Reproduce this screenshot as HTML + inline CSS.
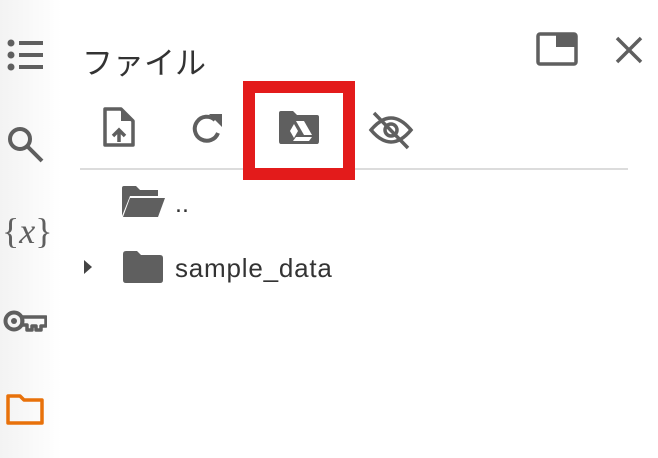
<!DOCTYPE html>
<html><head><meta charset="utf-8"><style>
body{margin:0;width:658px;height:458px;background:#fff;position:relative;overflow:hidden;font-family:"Liberation Sans","Noto Sans CJK JP",sans-serif;color:#222}
.side{position:absolute;left:0;top:0;width:62px;height:458px;background:linear-gradient(to right,#f3f3f3,#fff)}
svg{position:absolute}
.t{position:absolute}
</style></head><body>
<div class="side"></div>
<svg style="left:5px;top:38px" width="40" height="36" viewBox="0 0 40 36"><g fill="#5f5f5f"><circle cx="6" cy="5" r="3.5"/><circle cx="6" cy="17" r="3.5"/><circle cx="6" cy="29" r="3.5"/><rect x="14" y="3" width="24" height="4"/><rect x="14" y="15" width="24" height="4"/><rect x="14" y="27" width="24" height="4"/></g></svg>
<svg style="left:6px;top:125px" width="40" height="40" viewBox="0 0 40 40"><circle cx="14" cy="14" r="10" fill="none" stroke="#5f5f5f" stroke-width="4"/><path d="M21 21L36 36" stroke="#5f5f5f" stroke-width="4"/></svg>
<div class="t" style="left:2px;top:210px;font-family:'Liberation Serif',serif;font-size:36px;color:#5f5f5f"><span>{</span><i>x</i><span>}</span></div>
<svg style="left:3px;top:308px" width="44" height="26" viewBox="0 0 44 26"><circle cx="11" cy="13" r="8.5" fill="none" stroke="#5f5f5f" stroke-width="4"/><circle cx="11" cy="13" r="3" fill="#5f5f5f"/><path d="M19 9H43V18H38V22H33V18H29V22H24V17H19Z" fill="none" stroke="#5f5f5f" stroke-width="3.5" stroke-linejoin="round"/></svg>
<svg style="left:5px;top:392px" width="40" height="34" viewBox="0 0 40 34"><path d="M3 4H15L19 8H37V31H3Z" fill="none" stroke="#e8710a" stroke-width="3.5" stroke-linejoin="round"/></svg>
<div class="t" style="left:82px;top:38px;font-size:31px;color:#333">ファイル</div>
<svg style="left:536px;top:32px" width="42" height="34" viewBox="0 0 42 34"><rect x="2" y="2" width="38" height="30" rx="2" fill="none" stroke="#5f5f5f" stroke-width="3.5"/><rect x="20" y="2" width="20" height="13" fill="#5f5f5f"/></svg>
<svg style="left:614px;top:35px" width="30" height="30" viewBox="0 0 30 30"><path d="M3 3L27 27M27 3L3 27" stroke="#5f5f5f" stroke-width="3.5"/></svg>
<svg style="left:102px;top:106px" width="34" height="42" viewBox="0 0 34 42"><path d="M3 3H19L31 15V39H3Z" fill="none" stroke="#5f5f5f" stroke-width="3.5" stroke-linejoin="round"/><path d="M19 3V15H31" fill="#5f5f5f"/><path d="M17 36V25M11 30L17 24L23 30" stroke="#5f5f5f" stroke-width="3.5" fill="none"/></svg>
<svg style="left:189px;top:110px" width="38" height="38" viewBox="0 0 38 38"><path d="M29 23A12 12 0 1 1 26 10" fill="none" stroke="#5f5f5f" stroke-width="4"/><path d="M20 4H33V17Z" fill="#5f5f5f"/></svg>
<svg style="left:279px;top:111px" width="42" height="34" viewBox="0 0 42 34"><path d="M0 2Q0 0 2 0H14L18 4H38Q40 4 40 6V30Q40 33 38 33H2Q0 33 0 30Z" fill="#5f5f5f"/><path d="M17 10H25L33 24H25Z" fill="#fff"/><path d="M15 13L19 20L15 27L11 20Z" fill="#fff"/><path d="M17 26H33L30 30H14Z" fill="#fff"/></svg>
<div style="position:absolute;left:80px;top:168px;width:548px;height:2px;background:#dcdcdc"></div>
<div style="position:absolute;left:243px;top:81px;width:88px;height:75px;border:12px solid #e31b1b"></div>
<svg style="left:368px;top:110px" width="46" height="40" viewBox="0 0 46 40"><path d="M3 20Q23 -4 43 20Q23 44 3 20Z" fill="none" stroke="#5f5f5f" stroke-width="3.5"/><circle cx="23" cy="20" r="6" fill="none" stroke="#5f5f5f" stroke-width="3.5"/><path d="M6 3L40 38" stroke="#5f5f5f" stroke-width="3.5"/></svg>
<svg style="left:122px;top:186px" width="44" height="32" viewBox="0 0 44 32"><path d="M0 2Q0 0 2 0H14L18 4H36V10H8L0 30Z" fill="#5f5f5f"/><path d="M8 12H43L36 31H1Z" fill="#5f5f5f"/></svg>
<div class="t" style="left:175px;top:190px;font-size:25px;color:#333">..</div>
<svg style="left:82px;top:258px" width="12" height="18" viewBox="0 0 12 18"><path d="M2 2L10 9L2 16Z" fill="#444"/></svg>
<svg style="left:123px;top:251px" width="40" height="32" viewBox="0 0 40 32"><path d="M0 3Q0 0 3 0H14L18 4H37Q40 4 40 7V29Q40 32 37 32H3Q0 32 0 29Z" fill="#5f5f5f"/></svg>
<div class="t" style="left:175px;top:253px;font-size:26px;letter-spacing:0.8px;color:#333">sample_data</div>
</body></html>
